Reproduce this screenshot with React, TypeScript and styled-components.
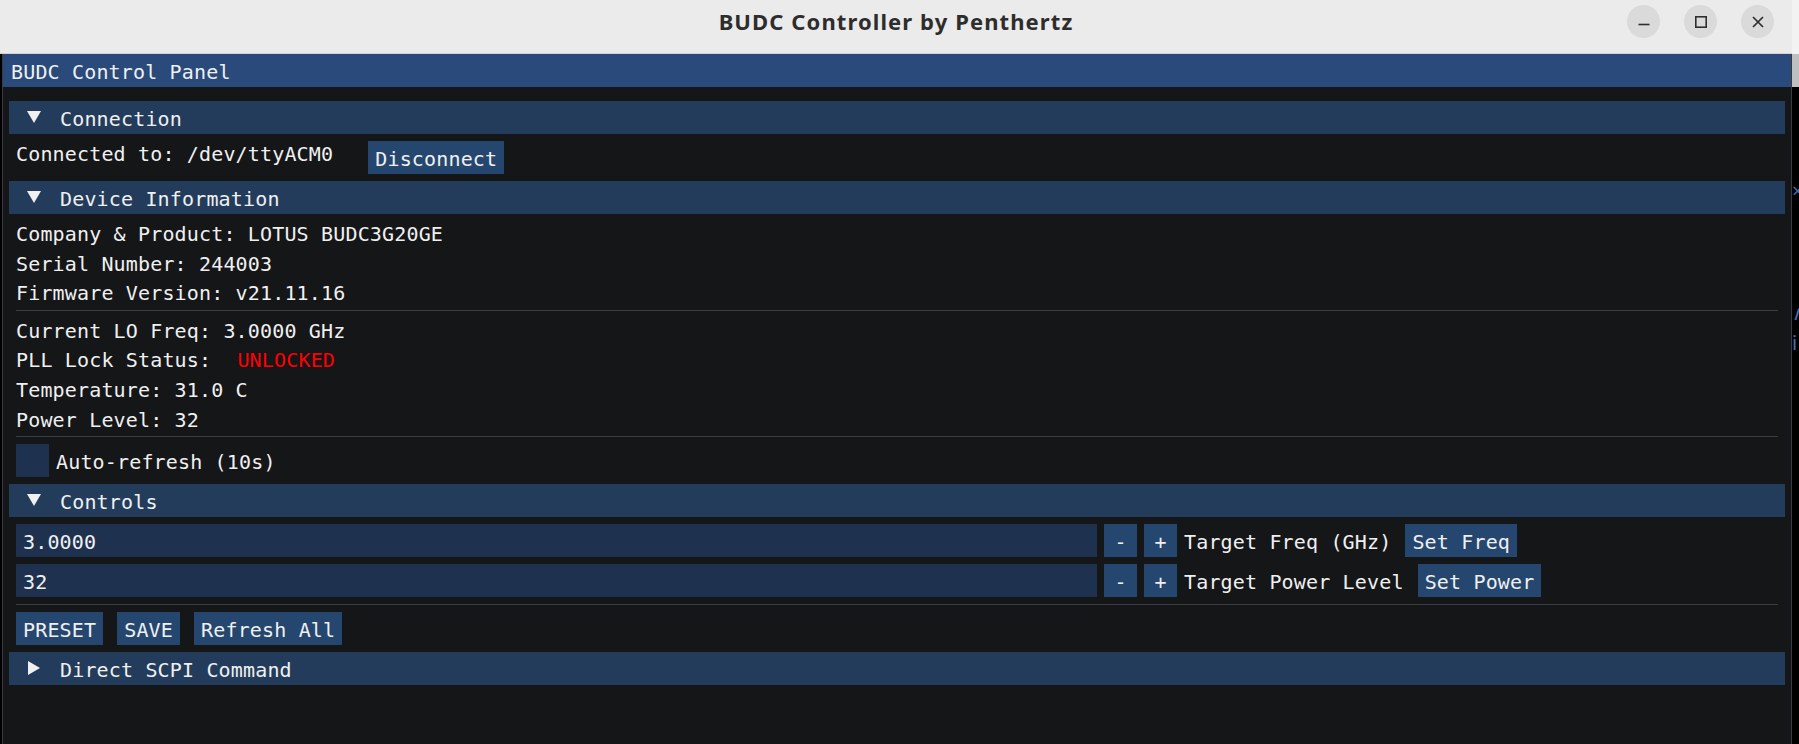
import React from "react";
import styled, { createGlobalStyle } from "styled-components";

const Global = createGlobalStyle`
  html, body { margin: 0; padding: 0; background: #000; }
  body { overflow: hidden; }
`;

const MONO = `"DejaVu Sans Mono", "Liberation Mono", monospace`;

const Screen = styled.div`
  width: 1799px;
  height: 744px;
  display: flex;
  background: #000;
  overflow: hidden;
`;

const OsWindow = styled.div`
  width: 1792px;
  flex: none;
  display: flex;
  flex-direction: column;
`;

const TitleBar = styled.div`
  height: 54px;
  flex: none;
  box-sizing: border-box;
  background: #ebebeb;
  border-bottom: 1px solid #d2d2d2;
  display: grid;
  grid-template-columns: 1fr auto 1fr;
  align-items: start;
  padding: 5px 18px 0 18px;
`;

const TitleText = styled.div`
  grid-column: 2;
  font-family: "Noto Sans", "Open Sans", sans-serif;
  font-weight: 700;
  font-size: 22px;
  letter-spacing: 1.1px;
  line-height: 32px;
  color: #2d2d2d;
`;

const WindowControls = styled.div`
  grid-column: 3;
  justify-self: end;
  display: flex;
  gap: 24px;
`;

const CircleButton = styled.div`
  width: 33px;
  height: 33px;
  border-radius: 50%;
  background: #dadada;
  display: flex;
  align-items: center;
  justify-content: center;
  color: #2e2e2e;
`;

const ImWindow = styled.div`
  flex: 1;
  margin-left: 2px;
  background: #151618;
  border-left: 1px solid #3a3b42;
  border-right: 1px solid #3a3b42;
  display: flex;
  flex-direction: column;
  font-family: ${MONO};
  font-size: 20px;
  letter-spacing: 0.16px;
  color: #f0f0f0;
`;

const PanelTitle = styled.div`
  height: 33px;
  flex: none;
  background: #294a7a;
  padding-left: 8px;
  line-height: 36.6px;
  white-space: pre;
`;

const Body = styled.div`
  padding: 14px 13px;
  display: flex;
  flex-direction: column;
  gap: 7px;
`;

const HeaderBar = styled.div`
  height: 33px;
  margin: 0 -7px;
  background: #233c5b;
  display: flex;
  align-items: flex-start;
  padding-left: 18px;
  gap: 19px;
`;

const Arrow = styled.svg<{ $top: number }>`
  flex: none;
  margin-top: ${(p) => p.$top}px;
`;

const FrameText = styled.div`
  height: 33px;
  line-height: 36.6px;
  white-space: pre;
`;

const Line = styled.div`
  height: 22.6px;
  line-height: 26.2px;
  white-space: pre;
  display: flex;
`;

const Row = styled.div<{ $gap: number }>`
  display: flex;
  align-items: flex-start;
  gap: ${(p) => p.$gap}px;
`;

const Button = styled.div`
  height: 33px;
  box-sizing: border-box;
  padding: 0 7px;
  background: #25476f;
  line-height: 36.6px;
  white-space: pre;
  flex: none;
`;

const StepButton = styled(Button)`
  width: 33px;
  padding: 0;
  text-align: center;
`;

const InputField = styled.div`
  width: 1081px;
  height: 33px;
  box-sizing: border-box;
  padding: 0 7px;
  background: #1e3250;
  line-height: 36.6px;
  flex: none;
`;

const Checkbox = styled.div`
  width: 33px;
  height: 33px;
  background: #1e3250;
  flex: none;
`;

const Separator = styled.div`
  height: 1px;
  background: #3c3d44;
`;

const Red = styled.span<{ $gap: number }>`
  color: #ff0000;
  margin-left: ${(p) => p.$gap}px;
`;

const SideStrip = styled.div`
  flex: 1;
  display: flex;
  flex-direction: column;
  overflow: hidden;
  background: #000;
`;

const StripTop = styled.div`
  height: 54px;
  flex: none;
  background: #f2f2f2;
`;

const StripMid = styled.div`
  height: 33px;
  flex: none;
  background: #bfbfbf;
`;

const StripGlyph = styled.div<{ $top: number }>`
  margin-top: ${(p) => p.$top}px;
  font-family: "Noto Sans", sans-serif;
  font-size: 20px;
  line-height: 22px;
  color: #3d6fb4;
  white-space: nowrap;
`;

const LabelGap = styled.div`
  height: 33px;
  line-height: 36.6px;
  white-space: pre;
  margin-right: 7px;
`;

function Header({ title, open }: { title: string; open: boolean }) {
  return (
    <HeaderBar>
      {open ? (
        <Arrow $top={10} width="14" height="12" viewBox="0 0 14 12">
          <polygon points="0,0 14,0 7,12" fill="#f0f0f0" />
        </Arrow>
      ) : (
        <Arrow $top={9} width="14" height="14" viewBox="0 0 14 14">
          <polygon points="1,0 13,7 1,14" fill="#f0f0f0" />
        </Arrow>
      )}
      <FrameText>{title}</FrameText>
    </HeaderBar>
  );
}

function StepInput({ value, label, action }: { value: string; label: string; action: string }) {
  return (
    <Row $gap={7}>
      <InputField>{value}</InputField>
      <StepButton>-</StepButton>
      <StepButton>+</StepButton>
      <LabelGap>{label}</LabelGap>
      <Button>{action}</Button>
    </Row>
  );
}

export default function App() {
  return (
    <>
      <Global />
      <Screen>
        <OsWindow>
          <TitleBar>
            <TitleText>BUDC Controller by Penthertz</TitleText>
            <WindowControls>
              <CircleButton>
                <svg width="14" height="14" viewBox="0 0 14 14">
                  <line x1="1.5" y1="9.5" x2="12.5" y2="9.5" stroke="currentColor" strokeWidth="1.6" />
                </svg>
              </CircleButton>
              <CircleButton>
                <svg width="14" height="14" viewBox="0 0 14 14">
                  <rect x="1.8" y="1.8" width="10.4" height="10.4" fill="none" stroke="currentColor" strokeWidth="1.6" />
                </svg>
              </CircleButton>
              <CircleButton>
                <svg width="14" height="14" viewBox="0 0 14 14">
                  <path d="M2 2 L12 12 M12 2 L2 12" stroke="currentColor" strokeWidth="1.7" />
                </svg>
              </CircleButton>
            </WindowControls>
          </TitleBar>
          <ImWindow>
            <PanelTitle>BUDC Control Panel</PanelTitle>
            <Body>
              <Header title="Connection" open />
              <Row $gap={35}>
                <Line>Connected to: /dev/ttyACM0</Line>
                <Button>Disconnect</Button>
              </Row>
              <Header title="Device Information" open />
              <Line>Company &amp; Product: LOTUS BUDC3G20GE</Line>
              <Line>Serial Number: 244003</Line>
              <Line>Firmware Version: v21.11.16</Line>
              <Separator />
              <Line>Current LO Freq: 3.0000 GHz</Line>
              <Line>
                {"PLL Lock Status: "}
                <Red $gap={14}>UNLOCKED</Red>
              </Line>
              <Line>Temperature: 31.0 C</Line>
              <Line>Power Level: 32</Line>
              <Separator />
              <Row $gap={7}>
                <Checkbox />
                <FrameText>Auto-refresh (10s)</FrameText>
              </Row>
              <Header title="Controls" open />
              <StepInput value="3.0000" label="Target Freq (GHz)" action="Set Freq" />
              <StepInput value="32" label="Target Power Level" action="Set Power" />
              <Separator />
              <Row $gap={14}>
                <Button>PRESET</Button>
                <Button>SAVE</Button>
                <Button>Refresh All</Button>
              </Row>
              <Header title="Direct SCPI Command" open={false} />
            </Body>
          </ImWindow>
        </OsWindow>
        <SideStrip>
          <StripTop />
          <StripMid />
          <StripGlyph $top={93}>×</StripGlyph>
          <StripGlyph $top={100}>∧</StripGlyph>
          <StripGlyph $top={8}>i</StripGlyph>
        </SideStrip>
      </Screen>
    </>
  );
}
